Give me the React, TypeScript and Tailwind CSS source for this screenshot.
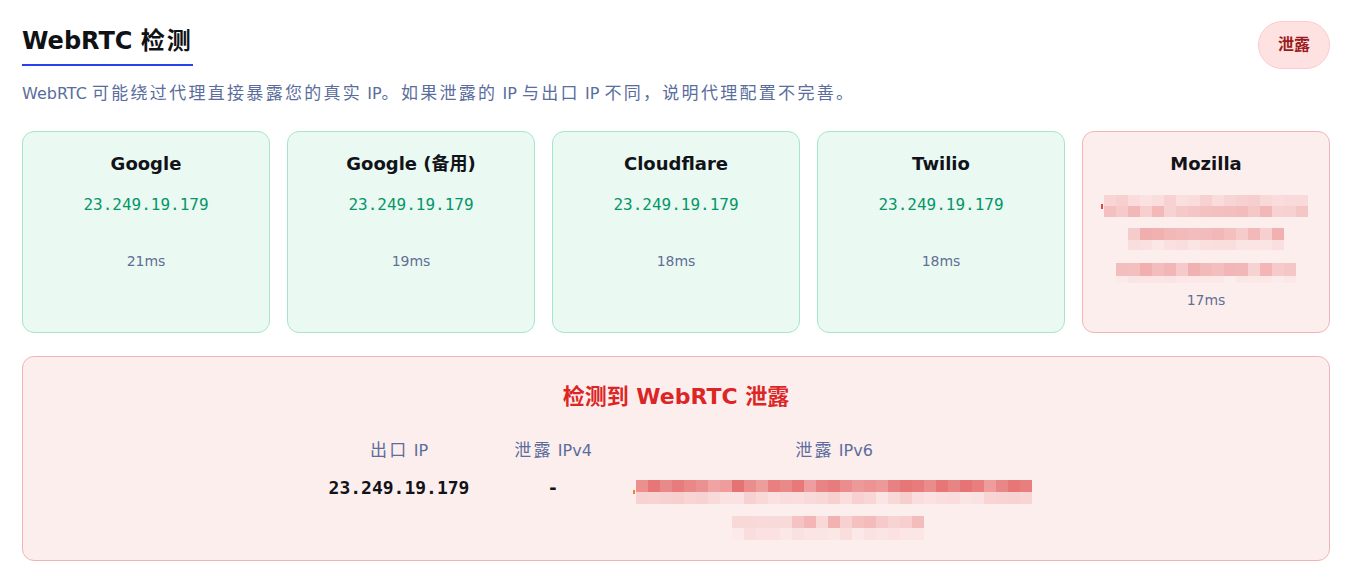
import React from "react";

function makeRand(seed: number) {
  let s = seed;
  return () => {
    s = (s * 9301 + 49297) % 233280;
    return s / 233280;
  };
}

type MosaicProps = {
  cols: number;
  seed: number;
  topClass: string;
  bottomClass: string;
  top: [number, number];
  bottom: [number, number];
};

function Mosaic({ cols, seed, topClass, bottomClass, top, bottom }: MosaicProps) {
  const r = makeRand(seed);
  const topVals = Array.from({ length: cols }, () => top[0] + r() * (top[1] - top[0]));
  const botVals = Array.from({ length: cols }, () => bottom[0] + r() * (bottom[1] - bottom[0]));
  return (
    <div className="flex flex-col items-center">
      <div className="flex">
        {topVals.map((a, i) => (
          <div key={i} className={topClass} style={{ backgroundColor: `rgba(222,72,72,${a.toFixed(3)})` }} />
        ))}
      </div>
      <div className="flex">
        {botVals.map((a, i) => (
          <div key={i} className={bottomClass} style={{ backgroundColor: `rgba(222,72,72,${a.toFixed(3)})` }} />
        ))}
      </div>
    </div>
  );
}

const CJK = /[\u3000-\u303f\u4e00-\u9fff\uff00-\uffef]/;

// Splits text into CJK / non-CJK runs so CJK runs get the wider setting seen in the reference.
function Zh({ text, cjkClass }: { text: string; cjkClass: string }) {
  const parts = text.match(/[\u3000-\u303f\u4e00-\u9fff\uff00-\uffef]+|[^\u3000-\u303f\u4e00-\u9fff\uff00-\uffef]+/g) || [];
  return (
    <>
      {parts.map((p, i) =>
        CJK.test(p) ? (
          <span key={i} className={cjkClass}>
            {p}
          </span>
        ) : (
          <span key={i}>{p}</span>
        )
      )}
    </>
  );
}

const servers = [
  { name: "Google", ms: "21ms" },
  { name: "Google (备用)", ms: "19ms" },
  { name: "Cloudflare", ms: "18ms" },
  { name: "Twilio", ms: "18ms" },
];

const sans = "font-['DejaVu_Sans','Noto_Sans_CJK_SC',sans-serif]";
const mono = "font-['DejaVu_Sans_Mono','Noto_Sans_CJK_SC',monospace]";
const zhBody = "text-[17px] tracking-[2.3px]";

export default function App() {
  return (
    <div className={`min-h-[580px] bg-white pl-[22px] pr-[29px] pt-[21px] ${sans}`}>
      <div className="flex h-[48px] items-center justify-between">
        <h1 className="inline-block border-b-2 border-[#2a3ff0] pb-[7px] text-[24px] font-bold leading-[32px] text-[#0f1115]">
          <Zh text="WebRTC 检测" cjkClass="tracking-[2px]" />
        </h1>
        <span className="flex h-[48px] items-center rounded-full border border-[#fecaca] bg-[#fee2e2] px-[19px] text-[16px] font-bold text-[#991b1b]">
          泄露
        </span>
      </div>

      <p className="mt-[12px] h-[24px] overflow-visible whitespace-nowrap text-[16px] leading-[24px] text-[#5a6d9c]">
        <Zh
          text="WebRTC 可能绕过代理直接暴露您的真实 IP。如果泄露的 IP 与出口 IP 不同，说明代理配置不完善。"
          cjkClass={zhBody}
        />
      </p>

      <div className="mt-[26px] grid grid-cols-5 gap-[17px]">
        {servers.map((s) => (
          <div
            key={s.name}
            className="flex h-[202px] flex-col items-center rounded-[12px] border border-[#a6e5cb] bg-[#ebf9f3] pt-[19px]"
          >
            <div className="text-[18px] font-bold leading-[26px] text-[#111318]">{s.name}</div>
            <div className={`mt-[11px] h-[34px] text-[16px] leading-[34px] text-[#059669] ${mono}`}>23.249.19.179</div>
            <div className="mt-[29px] text-[14px] leading-[20px] text-[#5f6f94]">{s.ms}</div>
          </div>
        ))}
        <div className="flex h-[202px] flex-col items-center rounded-[12px] border border-[#f4b4b4] bg-[#fdeeee] pt-[19px]">
          <div className="text-[18px] font-bold leading-[26px] text-[#111318]">Mozilla</div>
          <div className="mt-[18px] flex items-center">
            <div className="mr-[1px] h-[5px] w-[2px] bg-[#e0483c]" />
            <Mosaic cols={17} seed={11} topClass="h-[11px] w-[12px]" bottomClass="h-[11px] w-[12px]" top={[0.06, 0.2]} bottom={[0.16, 0.36]} />
            <div className="w-[3px]" />
          </div>
          <div className="mt-[11px]">
            <Mosaic cols={13} seed={23} topClass="h-[12px] w-[12px]" bottomClass="h-[10px] w-[12px]" top={[0.18, 0.4]} bottom={[0.03, 0.1]} />
          </div>
          <div className="mt-[13px]">
            <Mosaic cols={15} seed={37} topClass="h-[13px] w-[12px]" bottomClass="h-[7px] w-[12px]" top={[0.1, 0.38]} bottom={[0.0, 0.06]} />
          </div>
          <div className="mt-[7px] text-[14px] leading-[20px] text-[#5f6f94]">17ms</div>
        </div>
      </div>

      <div className="mt-[23px] flex h-[205px] flex-col items-center rounded-[12px] border border-[#f4b4b4] bg-[#fdeeee] pt-[25px]">
        <div className="text-[22px] font-bold leading-[30px] text-[#dc2626]">检测到 WebRTC 泄露</div>
        <div className="mt-[26px] flex justify-center gap-[45px] pl-[8px]">
          <div className="flex w-[142px] flex-col items-center">
            <div className="h-[24px] whitespace-nowrap text-[16px] leading-[24px] text-[#5a6d9c]">
              <Zh text="出口 IP" cjkClass={zhBody} />
            </div>
            <div className={`mt-[14px] text-[18px] font-bold leading-[24px] text-[#111318] ${mono}`}>23.249.19.179</div>
          </div>
          <div className="flex w-[76px] flex-col items-center">
            <div className="h-[24px] whitespace-nowrap text-[16px] leading-[24px] text-[#5a6d9c]">
              <Zh text="泄露 IPv4" cjkClass={zhBody} />
            </div>
            <div className={`mt-[14px] text-[18px] font-bold leading-[24px] text-[#111318] ${mono}`}>-</div>
          </div>
          <div className="flex w-[396px] flex-col items-center">
            <div className="h-[24px] whitespace-nowrap text-[16px] leading-[24px] text-[#5a6d9c]">
              <Zh text="泄露 IPv6" cjkClass={zhBody} />
            </div>
            <div className="relative mt-[18px]">
              <div className="absolute left-[-3px] top-[10px] h-[4px] w-[2px] bg-[#e8823c]" />
              <Mosaic cols={33} seed={5} topClass="h-[12px] w-[12px]" bottomClass="h-[12px] w-[12px]" top={[0.45, 0.75]} bottom={[0.05, 0.2]} />
            </div>
            <div className="mt-[12px] pr-[12px]">
              <Mosaic cols={16} seed={71} topClass="h-[12px] w-[12px]" bottomClass="h-[12px] w-[12px]" top={[0.12, 0.36]} bottom={[0.02, 0.1]} />
            </div>
          </div>
        </div>
      </div>
    </div>
  );
}
